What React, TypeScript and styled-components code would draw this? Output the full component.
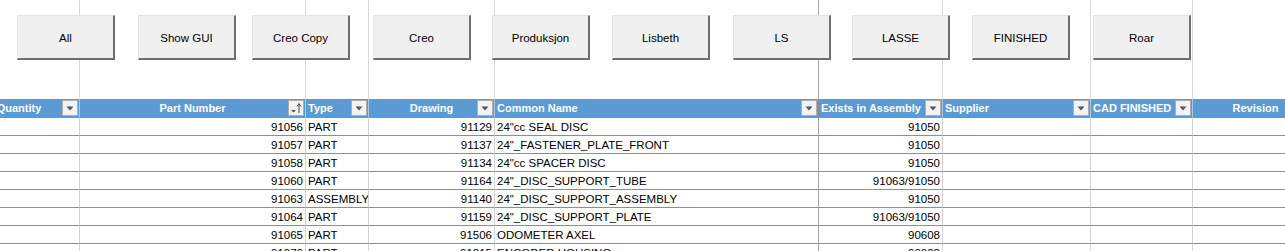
import styled, { createGlobalStyle } from "styled-components";

const GlobalStyle = createGlobalStyle`
  html, body {
    margin: 0;
    padding: 0;
    background: #ffffff;
    overflow: hidden;
  }
  body {
    font-family: "Liberation Sans", Arial, sans-serif;
  }
`;

type Align = "left" | "center" | "right";

type Column = {
  key: string;
  title: string;
  width: number;
  headAlign: Align;
  cellAlign: Align;
  sort?: boolean;
  freeze?: boolean;
};

const columns: Column[] = [
  { key: "qty", title: "Quantity", width: 121, headAlign: "center", cellAlign: "right" },
  { key: "part", title: "Part Number", width: 226, headAlign: "center", cellAlign: "right", sort: true },
  { key: "type", title: "Type", width: 63, headAlign: "left", cellAlign: "left" },
  { key: "drawing", title: "Drawing", width: 126, headAlign: "center", cellAlign: "right" },
  { key: "name", title: "Common Name", width: 324, headAlign: "left", cellAlign: "left", freeze: true },
  { key: "exists", title: "Exists in Assembly", width: 124, headAlign: "left", cellAlign: "right" },
  { key: "supplier", title: "Supplier", width: 148, headAlign: "left", cellAlign: "left" },
  { key: "cad", title: "CAD FINISHED", width: 102, headAlign: "left", cellAlign: "left" },
  { key: "rev", title: "Revision", width: 126, headAlign: "center", cellAlign: "left" },
];

const rows: Record<string, string>[] = [
  { part: "91056", type: "PART", drawing: "91129", name: '24"cc SEAL DISC', exists: "91050" },
  { part: "91057", type: "PART", drawing: "91137", name: '24"_FASTENER_PLATE_FRONT', exists: "91050" },
  { part: "91058", type: "PART", drawing: "91134", name: '24"cc SPACER DISC', exists: "91050" },
  { part: "91060", type: "PART", drawing: "91164", name: '24"_DISC_SUPPORT_TUBE', exists: "91063/91050" },
  { part: "91063", type: "ASSEMBLY", drawing: "91140", name: '24"_DISC_SUPPORT_ASSEMBLY', exists: "91050" },
  { part: "91064", type: "PART", drawing: "91159", name: '24"_DISC_SUPPORT_PLATE', exists: "91063/91050" },
  { part: "91065", type: "PART", drawing: "91506", name: "ODOMETER AXEL", exists: "90608" },
  { part: "91070", type: "PART", drawing: "91215", name: "ENCODER HOUSING", exists: "90608" },
];

// form buttons floating over the sheet, left edge in px
const buttons = [
  { label: "All", left: 17 },
  { label: "Show GUI", left: 138 },
  { label: "Creo Copy", left: 252 },
  { label: "Creo", left: 373 },
  { label: "Produksjon", left: 492 },
  { label: "Lisbeth", left: 612 },
  { label: "LS", left: 733 },
  { label: "LASSE", left: 852 },
  { label: "FINISHED", left: 972 },
  { label: "Roar", left: 1093 },
];

const BUTTON_W = 98;

const Page = styled.div`
  position: relative;
  width: 1285px;
  height: 251px;
  overflow: hidden;
`;

const Sheet = styled.div`
  display: flex;
  flex-direction: column;
  margin-left: -41px;
  width: max-content;
`;

const Row = styled.div`
  display: flex;
`;

const TopCell = styled.div<{ $w: number; $freeze?: boolean }>`
  box-sizing: border-box;
  width: ${(p) => p.$w}px;
  height: 99px;
  border-right: 1px solid ${(p) => (p.$freeze ? "#a6a6a6" : "#d9d9d9")};
`;

const HeadCell = styled.div<{ $w: number; $align: Align; $freeze?: boolean }>`
  position: relative;
  box-sizing: border-box;
  width: ${(p) => p.$w}px;
  height: 18px;
  display: flex;
  align-items: center;
  justify-content: ${(p) =>
    p.$align === "left" ? "flex-start" : p.$align === "right" ? "flex-end" : "center"};
  padding: 0 2px;
  overflow: hidden;
  background: #5b9bd5;
  border-right: 1px solid ${(p) => (p.$freeze ? "#8a8a8a" : "#a9c8e8")};
  color: #ffffff;
  font-size: 11px;
  font-weight: bold;
  white-space: nowrap;
`;

const FilterBox = styled.div`
  position: absolute;
  top: 1px;
  right: 1px;
  box-sizing: border-box;
  width: 16px;
  height: 16px;
  display: flex;
  align-items: center;
  justify-content: center;
  background: #f3f3f3;
  border: 1px solid #aeaeae;
`;

const Cell = styled.div<{ $w: number; $align: Align; $freeze?: boolean }>`
  box-sizing: border-box;
  width: ${(p) => p.$w}px;
  height: 18px;
  padding: 1px 2px 0;
  border-top: 1px solid #5b9bd5;
  border-right: 1px solid ${(p) => (p.$freeze ? "#a6a6a6" : "#d4d4d4")};
  color: #000000;
  font-size: 11.5px;
  line-height: 16px;
  text-align: ${(p) => p.$align};
  white-space: nowrap;
  overflow: hidden;
`;

const Toolbar = styled.div`
  position: absolute;
  top: 15px;
  left: 0;
  display: flex;
`;

const FormButton = styled.div<{ $offset: number }>`
  box-sizing: border-box;
  width: ${BUTTON_W}px;
  height: 45px;
  margin-left: ${(p) => p.$offset}px;
  padding-top: 1px;
  display: flex;
  align-items: center;
  justify-content: center;
  background: #f0f0f0;
  border-top: 1px solid #e3e3e3;
  border-left: 1px solid #e3e3e3;
  border-right: 2px solid #6e6e6e;
  border-bottom: 2px solid #6e6e6e;
  color: #000000;
  font-size: 11.5px;
`;

const FilterArrow = () => (
  <svg width="8" height="5" viewBox="0 0 8 5">
    <path d="M0.5 0.5 H7.5 L4 4.5 Z" fill="#555" />
  </svg>
);

const SortArrow = () => (
  <svg width="12" height="12" viewBox="0 0 12 12">
    <path d="M1 8 H6 L3.5 10.5 Z" fill="#555" />
    <path d="M9 11 V2" stroke="#444" strokeWidth="1" />
    <path d="M7 4.5 L9 1.5 L11 4.5" stroke="#444" strokeWidth="1" fill="none" />
  </svg>
);

const App = () => {
  let prevRight = 0;

  return (
    <Page>
      <GlobalStyle />
      <Sheet>
        <Row>
          {columns.map((c) => (
            <TopCell key={c.key} $w={c.width} $freeze={c.freeze} />
          ))}
        </Row>
        <Row>
          {columns.map((c) => (
            <HeadCell key={c.key} $w={c.width} $align={c.headAlign} $freeze={c.freeze}>
              {c.title}
              {c.key !== "rev" && (
                <FilterBox>{c.sort ? <SortArrow /> : <FilterArrow />}</FilterBox>
              )}
            </HeadCell>
          ))}
        </Row>
        {rows.map((r, i) => (
          <Row key={i}>
            {columns.map((c) => (
              <Cell key={c.key} $w={c.width} $align={c.cellAlign} $freeze={c.freeze}>
                {r[c.key] ?? ""}
              </Cell>
            ))}
          </Row>
        ))}
      </Sheet>
      <Toolbar>
        {buttons.map((b) => {
          const offset = b.left - prevRight;
          prevRight = b.left + BUTTON_W;
          return (
            <FormButton key={b.label} $offset={offset}>
              {b.label}
            </FormButton>
          );
        })}
      </Toolbar>
    </Page>
  );
};

export default App;
